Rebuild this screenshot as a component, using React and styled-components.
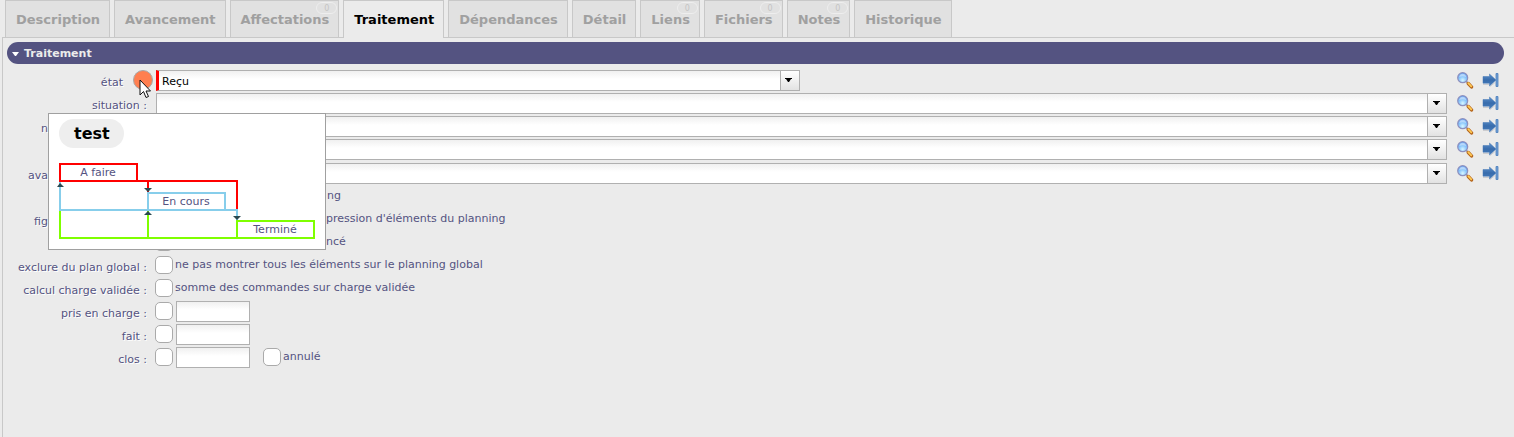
import React from "react";
import styled, { createGlobalStyle } from "styled-components";

const Global = createGlobalStyle`
  * { box-sizing: border-box; }
  body {
    margin: 0;
    background: #ebebeb;
    color: #545381;
    font-family: "DejaVu Sans", Verdana, sans-serif;
    font-size: 11px;
    line-height: 14px;
  }
  button, input, select { font: inherit; margin: 0; }
`;

const Page = styled.div`
  display: flex;
  flex-direction: column;
  min-height: 100vh;
  padding-left: 2px;
`;

const TabBar = styled.nav`
  display: flex;
  gap: 4px;
  padding-left: 3px;
`;

const Tab = styled.button`
  position: relative;
  height: 38px;
  padding: 0 9px 0 10px;
  border: 1px solid #c8c8c8;
  border-bottom: 0;
  background: ${(p) => (p.$active ? "#ebebeb" : "#e1e1e1")};
  color: ${(p) => (p.$active ? "#000" : "#a0a0a0")};
  font-size: 13px;
  font-weight: bold;
  white-space: nowrap;
  box-shadow: ${(p) => (p.$active ? "none" : "inset 0 -1px #c8c8c8")};
`;

const Badge = styled.span`
  position: absolute;
  top: 1px;
  right: 1px;
  width: 21px;
  height: 12px;
  border: 1px solid #eeeeee;
  border-radius: 6px;
  color: #c4c4c4;
  font-size: 8px;
  font-weight: normal;
  line-height: 11px;
  text-align: center;
`;

const Panel = styled.main`
  flex: 1;
  margin-top: -1px;
  padding: 4px 10px 0 4px;
  border-top: 1px solid #c8c8c8;
  border-left: 1px solid #c8c8c8;
`;

const SectionTitle = styled.button`
  display: flex;
  align-items: center;
  gap: 5px;
  width: 100%;
  height: 22px;
  padding: 1px 5px 0;
  border: 0;
  border-radius: 11px;
  background: #545381;
  color: #ebebeb;
  font-weight: bold;
`;

const Form = styled.form`
  display: flex;
  flex-direction: column;
  gap: 2px;
  padding: 6px 4px 0 0;
`;

const Row = styled.div`
  position: relative;
  display: flex;
  align-items: flex-start;
  height: 21px;
`;

const Label = styled.label`
  flex: none;
  width: 141px;
  padding: 6px 1px 0 0;
  text-align: right;
  text-shadow: 1px 1px #fff;
  white-space: nowrap;
`;

const StateLabel = styled(Label)`
  width: 117px;
`;

const CutLabel = styled(Label)`
  width: 42px;
  margin-right: 99px;
`;

const StateDot = styled.span`
  flex: none;
  width: 20px;
  height: 20px;
  margin: 0 3px 0 9px;
  border: 1px solid #a8a8a8;
  border-radius: 50%;
  background: #ff7f50;
`;

const Field = styled.div`
  flex: 1;
  display: flex;
  align-items: flex-start;
  margin-left: ${(p) => (p.$state ? 0 : 8)}px;
`;

const Combo = styled.span`
  position: relative;
  display: block;
  width: ${(p) => (p.$half ? "calc(50% - 2px)" : "100%")};
`;

const Select = styled.select`
  display: block;
  appearance: none;
  width: 100%;
  height: 21px;
  padding: 2px 24px 0 3px;
  border: 1px solid #b0b0b0;
  border-left: ${(p) => (p.required ? "3px solid #f00" : "1px solid #b0b0b0")};
  border-radius: 0;
  background: linear-gradient(#f0f0f0, #fff 8px);
  color: #000;
`;

const Arrow = styled.span`
  position: absolute;
  top: 1px;
  right: 1px;
  display: flex;
  align-items: center;
  justify-content: center;
  width: 19px;
  height: 19px;
  padding: 0 2px 1px 0;
  border-left: 1px solid #b0b0b0;
  background: linear-gradient(#fff, #e2e2e2);
  pointer-events: none;
`;

const Actions = styled.div`
  flex: none;
  display: flex;
  gap: 8px;
  margin-left: 10px;
  padding: 1px 1px 0 0;
`;

const IconButton = styled.button`
  width: 17px;
  height: 18px;
  padding: 0;
  border: 0;
  background: none;
  svg { display: block; }
`;

const Check = styled.input`
  appearance: none;
  flex: none;
  width: 18px;
  height: 18px;
  border: 1px solid #aaa;
  border-radius: 5px;
  background: #fff;
`;

const CheckField = styled.div`
  display: flex;
  align-items: flex-start;
  margin-left: 7px;
  padding-top: 1px;
`;

const CheckText = styled.label`
  padding: 2px 0 0 ${(p) => p.$indent || 2}px;
  line-height: 13px;
  white-space: nowrap;
`;

const DateInput = styled.input`
  width: 74px;
  height: 21px;
  margin: -1px 13px 0 3px;
  padding: 0 3px;
  border: 1px solid #b0b0b0;
  background: linear-gradient(#f0f0f0, #fff 8px);
`;

const Popup = styled.aside`
  position: absolute;
  z-index: 1;
  top: 43px;
  left: 41px;
  width: 278px;
  height: 137px;
  padding: 5px 10px;
  border: 1px solid #a0a0a0;
  background: #fff;
`;

const PopupTitle = styled.h2`
  width: max-content;
  margin: 0 0 15px;
  padding: 1px 14px 0 15px;
  border-radius: 15px;
  background: #eee;
  color: #000;
  font-size: 16px;
  line-height: 28px;
`;

const Diagram = styled.svg`
  display: block;
  overflow: visible;
`;

const Cursor = styled.svg`
  position: absolute;
  z-index: 2;
  top: 9px;
  left: 132px;
`;

const Spacer = styled.div`
  height: 1px;
  margin-bottom: -2px;
`;

const Search = () => (
  <svg width="17" height="18" viewBox="0 0 17 18">
    <defs>
      <radialGradient id="lens" cx="50%" cy="75%" r="70%">
        <stop offset="0" stopColor="#d9f6ff" />
        <stop offset="0.5" stopColor="#8fcafc" />
        <stop offset="1" stopColor="#5c9cf0" />
      </radialGradient>
    </defs>
    <path d="M9.200 10.200l2 2" stroke="#85859a" strokeWidth="1.6" />
    <path d="M11.300 12.500l3.200 3.400" stroke="#b5651d" strokeWidth="3.4" strokeLinecap="round" />
    <path d="M11.300 12.200l3 3.200" stroke="#ffcb55" strokeWidth="1.7" strokeLinecap="round" />
    <circle cx="5.700" cy="6.700" r="5" fill="url(#lens)" stroke="#8f90bd" strokeWidth="1.200" />
    <path d="M2.200 6c.3-4.500 6.600-4.500 7 0-2-1-5-1-7 0z" fill="#fff" opacity=".45" />
  </svg>
);

const GoTo = () => (
  <svg width="17" height="18" viewBox="0 0 17 18">
    <defs>
      <linearGradient id="shaft" x1="0" y1="0" x2="0" y2="1">
        <stop offset="0" stopColor="#5b8fcb" />
        <stop offset="0.5" stopColor="#386cac" />
        <stop offset="1" stopColor="#467dbd" />
      </linearGradient>
    </defs>
    <path d="M1 13.500h6M8 15.500l5-4" stroke="#cccccf" fill="none" />
    <path d="M1 5.500h6.500V3L14 9l-6.500 6v-2.800H1z" fill="url(#shaft)" stroke="#4377b5" strokeWidth=".5" />
    <path d="M14 2.500h2v13h-2z" fill="#6f9fd6" stroke="#4b7dbb" strokeWidth=".8" />
  </svg>
);

const Workflow = () => (
  <Diagram width="256" height="76" viewBox="0 0 256 76">
    <g fill="none" strokeWidth="2">
      <path d="M1 1h77v17H1zM78 18h100v28M89 18v11" stroke="#f00" />
      <path d="M1 19v28h177v10M89 47V30h77v17" stroke="#87ceeb" />
      <path d="M1 48v27h254V58h-77v17M89 48v27" stroke="#7fff00" />
    </g>
    <g fill="#2b4a50">
      <path d="M1 20l4 4h-7zM89 29l-4-4h8zM89 48l4 4h-8zM178 57l-4-4h8z" />
    </g>
    <g fill="#545381" fontSize="11" textAnchor="middle">
      <text x="39" y="13">A faire</text>
      <text x="127" y="42">En cours</text>
      <text x="216" y="70">Terminé</text>
    </g>
  </Diagram>
);

const tabs = [
  ["Description"], ["Avancement"], ["Affectations", 0], ["Traitement"], ["Dépendances"],
  ["Détail"], ["Liens", 0], ["Fichiers", 0], ["Notes", 0], ["Historique"],
];

function RowLabel({ id, label, cut }) {
  return cut
    ? <CutLabel htmlFor={id}>{label}</CutLabel>
    : <Label htmlFor={id}>{label} :</Label>;
}

function ComboRow({ id, label, value = "", state, cut }) {
  return (
    <Row>
      {state ? <StateLabel htmlFor={id}>{label}</StateLabel> : <RowLabel id={id} label={label} cut={cut} />}
      {state && <StateDot />}
      <Field $state={state}>
        <Combo $half={state}>
          <Select id={id} required={state} defaultValue={value}>
            <option>{value}</option>
          </Select>
          <Arrow>
            <svg width="7" height="4"><path d="M0 0h7v1h-1L4 4H3L1 1H0z" fill="#000" /></svg>
          </Arrow>
        </Combo>
      </Field>
      <Actions>
        <IconButton type="button" aria-label="Rechercher"><Search /></IconButton>
        <IconButton type="button" aria-label="Ouvrir"><GoTo /></IconButton>
      </Actions>
      {state && (
        <>
          <Popup>
            <PopupTitle>test</PopupTitle>
            <Workflow />
          </Popup>
          <Cursor width="12" height="20" viewBox="0 0 12 20">
            <path d="M1 1v15l3.500-3.500 2.500 6 2.500-1-2.500-5.500h4.500z" fill="#fff" stroke="#111" />
          </Cursor>
        </>
      )}
    </Row>
  );
}

function CheckRow({ id, label, text, date, cut, indent, children }) {
  return (
    <Row>
      <RowLabel id={id} label={label} cut={cut} />
      <CheckField>
        <Check type="checkbox" id={id} />
        {text && <CheckText htmlFor={id} $indent={indent}>{text}</CheckText>}
        {date && <DateInput type="text" aria-label={`date ${label}`} />}
        {children}
      </CheckField>
    </Row>
  );
}

export default function App() {
  return (
    <>
      <Global />
      <Page>
        <TabBar>
          {tabs.map(([name, count]) => (
            <Tab key={name} $active={name === "Traitement"}>
              {name}
              {count !== undefined && <Badge>{count}</Badge>}
            </Tab>
          ))}
        </TabBar>
        <Panel>
          <SectionTitle>
            <svg width="7" height="4"><path d="M0 0h7L4 4H3z" fill="#fff" /></svg>
            Traitement
          </SectionTitle>
          <Form>
            <ComboRow id="etat" label="état" value="Reçu" state />
            <ComboRow id="situation" label="situation" />
            <ComboRow id="niveau" label="n" cut />
            <ComboRow id="responsable" label="" cut />
            <Spacer />
            <ComboRow id="avancement" label="ava" cut />
            <CheckRow id="fixer" label="" cut text="ng" indent={154} />
            <CheckRow id="figer" label="fig" cut text="ppression d'éléments du planning" indent={146} />
            <CheckRow id="pause" label="" cut text="ncé" indent={153} />
            <CheckRow id="exclure" label="exclure du plan global" text="ne pas montrer tous les éléments sur le planning global" />
            <CheckRow id="calcul" label="calcul charge validée" text="somme des commandes sur charge validée" />
            <CheckRow id="pris" label="pris en charge" date />
            <CheckRow id="fait" label="fait" date />
            <CheckRow id="clos" label="clos" date>
              <Check type="checkbox" id="annule" />
              <CheckText htmlFor="annule">annulé</CheckText>
            </CheckRow>
          </Form>
        </Panel>
      </Page>
    </>
  );
}
